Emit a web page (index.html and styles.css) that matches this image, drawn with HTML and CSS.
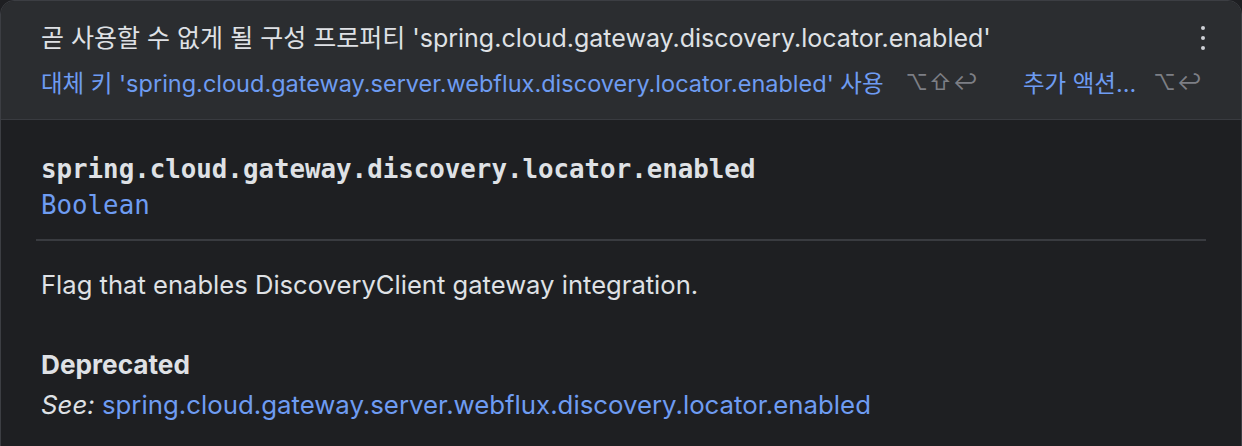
FILE: index.html
```html
<!DOCTYPE html>
<html lang="ko">
<head>
<meta charset="utf-8">
<link rel="stylesheet" href="styles.css">
</head>
<body>
<div class="popup">
  <header class="head">
    <div class="head-row">
      <div class="title">곧 사용할 수 없게 될 구성 프로퍼티 'spring.cloud.gateway.discovery.locator.enabled'</div>
      <div class="kebab"><span></span><span></span><span></span></div>
    </div>
    <div class="actions">
      <span class="link">대체 키 'spring.cloud.gateway.server.webflux.discovery.locator.enabled' 사용</span>
      <span class="keys">⌥⇧↩</span>
      <span class="link more">추가 액션...</span>
      <span class="keys last">⌥↩</span>
    </div>
  </header>
  <main class="body">
    <div class="def">
      <div class="prop">spring.cloud.gateway.discovery.locator.enabled</div>
      <div class="type">Boolean</div>
    </div>
    <div class="divider"></div>
    <div class="doc">
      <p class="desc">Flag that enables DiscoveryClient gateway integration.</p>
      <p class="dep-title">Deprecated</p>
      <p class="see"><em>See:</em> <span class="link">spring.cloud.gateway.server.webflux.discovery.locator.enabled</span></p>
    </div>
  </main>
</div>
</body>
</html>
```
FILE: styles.css
```css
html, body {
  margin: 0;
  padding: 0;
  background: #1e1f22;
}
body {
  width: 1242px;
  height: 446px;
  overflow: hidden;
  font-family: Inter, "Noto Sans CJK KR", sans-serif;
  color: #dfe1e5;
}
.popup {
  box-sizing: border-box;
  width: 1242px;
  height: 460px;
  border: 1px solid #3c3e43;
  border-radius: 14px 14px 0 0;
  overflow: hidden;
  background: #1e1f22;
}
.head {
  box-sizing: border-box;
  background: #2b2d30;
  border-bottom: 1px solid #393b40;
  padding: 19px 30px 0 40px;
  height: 119px;
}
.head-row {
  display: flex;
  align-items: center;
  justify-content: space-between;
  height: 36px;
}
.title {
  font-size: 25px;
  line-height: 36px;
  color: #dfe1e5;
  white-space: nowrap;
}
.kebab {
  display: flex;
  flex-direction: column;
  gap: 6px;
  padding-right: 6px;
}
.kebab span {
  width: 4px;
  height: 4px;
  border-radius: 50%;
  background: #ced0d6;
}
.actions {
  display: flex;
  align-items: center;
  margin-top: 11px;
  height: 30px;
  white-space: nowrap;
  font-size: 23.5px;
}
.link {
  color: #6e9cf2;
}
.keys {
  color: #7d7f85;
  font-size: 22px;
  margin-left: 22px;
  letter-spacing: 1px;
}
.keys.last {
  margin-left: 17px;
}
.more {
  margin-left: 44px;
}
.body {
  padding: 0 35px;
}
.def {
  padding: 31px 5px 16px;
  font-family: "DejaVu Sans Mono", "Liberation Mono", monospace;
  font-size: 25.8px;
  line-height: 36px;
}
.prop {
  font-weight: bold;
  color: #dfe1e5;
}
.type {
  color: #6e9cf2;
}
.divider {
  height: 2px;
  background: #393b40;
}
.doc {
  padding: 24px 5px 0;
  font-size: 25.6px;
  line-height: 40px;
}
.doc p {
  margin: 0;
}
.desc {
  margin-bottom: 40px !important;
}
.dep-title {
  font-weight: bold;
  font-size: 26.2px;
}
.see {
  font-size: 25.8px;
}
.see em {
  color: #dfe1e5;
}
```
